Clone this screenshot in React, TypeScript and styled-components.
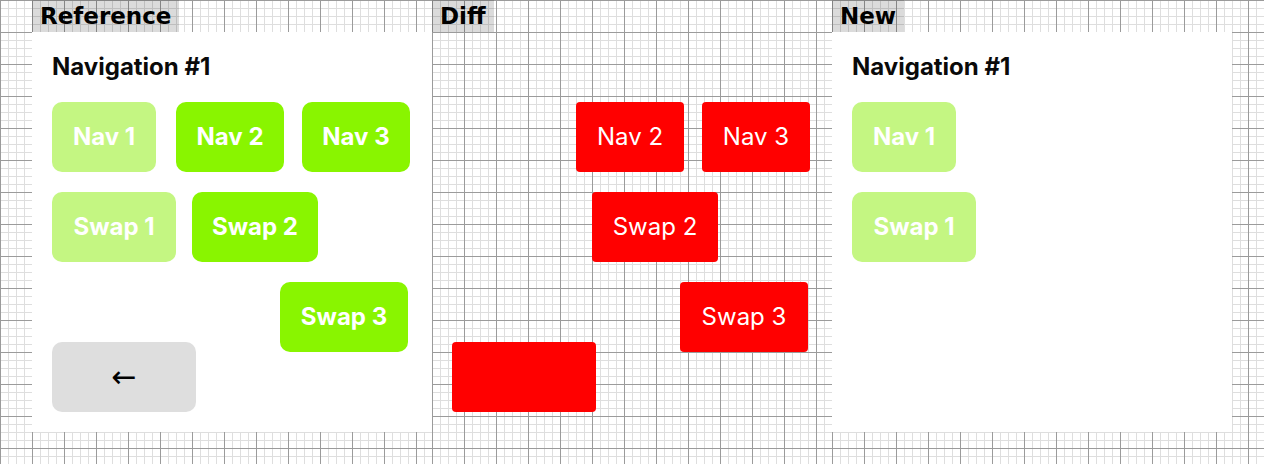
import styled, {createGlobalStyle, css} from "styled-components";

type Mode = 'reference' | 'diff' | 'new'
type Tone = 'dim' | 'live'

interface Item {
  label: string
  width: number
  offset: number
  tone: Tone
}

const rows: { y: number, items: Item[] }[] = [
  {
    y: 0, items: [
      {label: 'Nav 1', width: 104, offset: 0, tone: 'dim'},
      {label: 'Nav 2', width: 108, offset: 20, tone: 'live'},
      {label: 'Nav 3', width: 108, offset: 18, tone: 'live'},
    ]
  },
  {
    y: 1, items: [
      {label: 'Swap 1', width: 124, offset: 0, tone: 'dim'},
      {label: 'Swap 2', width: 126, offset: 16, tone: 'live'},
    ]
  },
  {
    y: 2, items: [
      {label: 'Swap 3', width: 128, offset: 228, tone: 'live'},
    ]
  },
]

const columns: { name: string, mode: Mode }[] = [
  {name: 'Reference', mode: 'reference'},
  {name: 'Diff', mode: 'diff'},
  {name: 'New', mode: 'new'},
]

const GlobalStyle = createGlobalStyle`
  html, body {
    margin: 0;
    padding: 0;
  }

  body {
    font-family: Inter, "Noto Sans", sans-serif;
  }
`;

const gridPaper = css`
  background-color: #fff;
  background-image: linear-gradient(to right, #9b9b9b 1px, transparent 1px),
  linear-gradient(to bottom, #9b9b9b 1px, transparent 1px),
  linear-gradient(to right, #dedede 1px, transparent 1px),
  linear-gradient(to bottom, #dedede 1px, transparent 1px);
  background-size: 32px 32px, 32px 32px, 8px 8px, 8px 8px;
`;

export default function App() {
  return (
    <>
      <GlobalStyle/>
      <Page>
        {columns.map(col => (
          <Column key={col.name} $ownGrid={col.mode === 'diff'}>
            <Label>{col.name}</Label>
            <Panel $mode={col.mode}>
              <Title $hidden={col.mode === 'diff'}>Navigation #1</Title>
              <Rows>
                {rows.map(row => (
                  <Row key={row.y}>
                    {row.items.map(item => {
                      const hidden = (col.mode === 'diff' && item.tone === 'dim') || (col.mode === 'new' && item.tone === 'live')
                      return (
                        <NavButton
                          key={item.label}
                          $width={item.width}
                          $offset={item.offset}
                          $tone={col.mode === 'diff' ? 'diff' : item.tone}
                          $hidden={hidden}
                        >
                          {item.label}
                        </NavButton>
                      )
                    })}
                  </Row>
                ))}
              </Rows>
              {col.mode !== 'new' && <BackButton $diff={col.mode === 'diff'}>{col.mode === 'diff' ? '' : '←'}</BackButton>}
            </Panel>
          </Column>
        ))}
      </Page>
    </>
  );
}

const Page = styled.div`
  ${gridPaper};
  width: 1264px;
  height: 464px;
  box-sizing: border-box;
  padding-left: 32px;
  display: flex;
  overflow: hidden;
`;

const Column = styled.div<{ $ownGrid: boolean }>`
  width: 400px;
  height: 464px;
  display: flex;
  flex-direction: column;
  ${p => p.$ownGrid && gridPaper};
`;

const Label = styled.div`
  align-self: flex-start;
  height: 32px;
  padding: 0 8px;
  background: rgba(0, 0, 0, 0.14);
  color: #000;
  font-family: "DejaVu Sans", sans-serif;
  font-weight: 700;
  font-size: 23px;
  line-height: 32px;
`;

const Panel = styled.div<{ $mode: Mode }>`
  position: relative;
  width: 400px;
  height: 400px;
  box-sizing: border-box;
  padding: 20px;
  background: ${p => p.$mode === 'diff' ? 'transparent' : '#fff'};
`;

const Title = styled.h2<{ $hidden: boolean }>`
  margin: 0 0 20px;
  font-size: 24px;
  line-height: 30px;
  font-weight: 700;
  color: #0a0a0a;
  visibility: ${p => p.$hidden ? 'hidden' : 'visible'};
`;

const Rows = styled.div`
  display: flex;
  flex-direction: column;
  gap: 20px;
`;

const Row = styled.div`
  display: flex;
  align-items: center;
`;

const toneStyles = {
  dim: css`
    background: #c4f682;
    color: #fff;
    font-weight: 700;
    border-radius: 10px;
  `,
  live: css`
    background: #89f500;
    color: #fff;
    font-weight: 700;
    border-radius: 10px;
  `,
  diff: css`
    background: #ff0000;
    color: #fff;
    font-weight: 400;
    border-radius: 4px;
  `,
}

const NavButton = styled.div<{ $width: number, $offset: number, $tone: 'dim' | 'live' | 'diff', $hidden: boolean }>`
  width: ${p => p.$width}px;
  height: 70px;
  margin-left: ${p => p.$offset}px;
  display: flex;
  align-items: center;
  justify-content: center;
  font-size: 24px;
  line-height: 70px;
  white-space: nowrap;
  ${p => toneStyles[p.$tone]};
  visibility: ${p => p.$hidden ? 'hidden' : 'visible'};
`;

const BackButton = styled.div<{ $diff: boolean }>`
  position: absolute;
  left: 20px;
  bottom: 20px;
  width: 144px;
  height: 70px;
  display: flex;
  align-items: center;
  justify-content: center;
  border-radius: ${p => p.$diff ? '4px' : '10px'};
  background: ${p => p.$diff ? '#ff0000' : '#dedede'};
  color: #000;
  font-family: "DejaVu Sans", sans-serif;
  font-size: 30px;
  line-height: 70px;
`;
